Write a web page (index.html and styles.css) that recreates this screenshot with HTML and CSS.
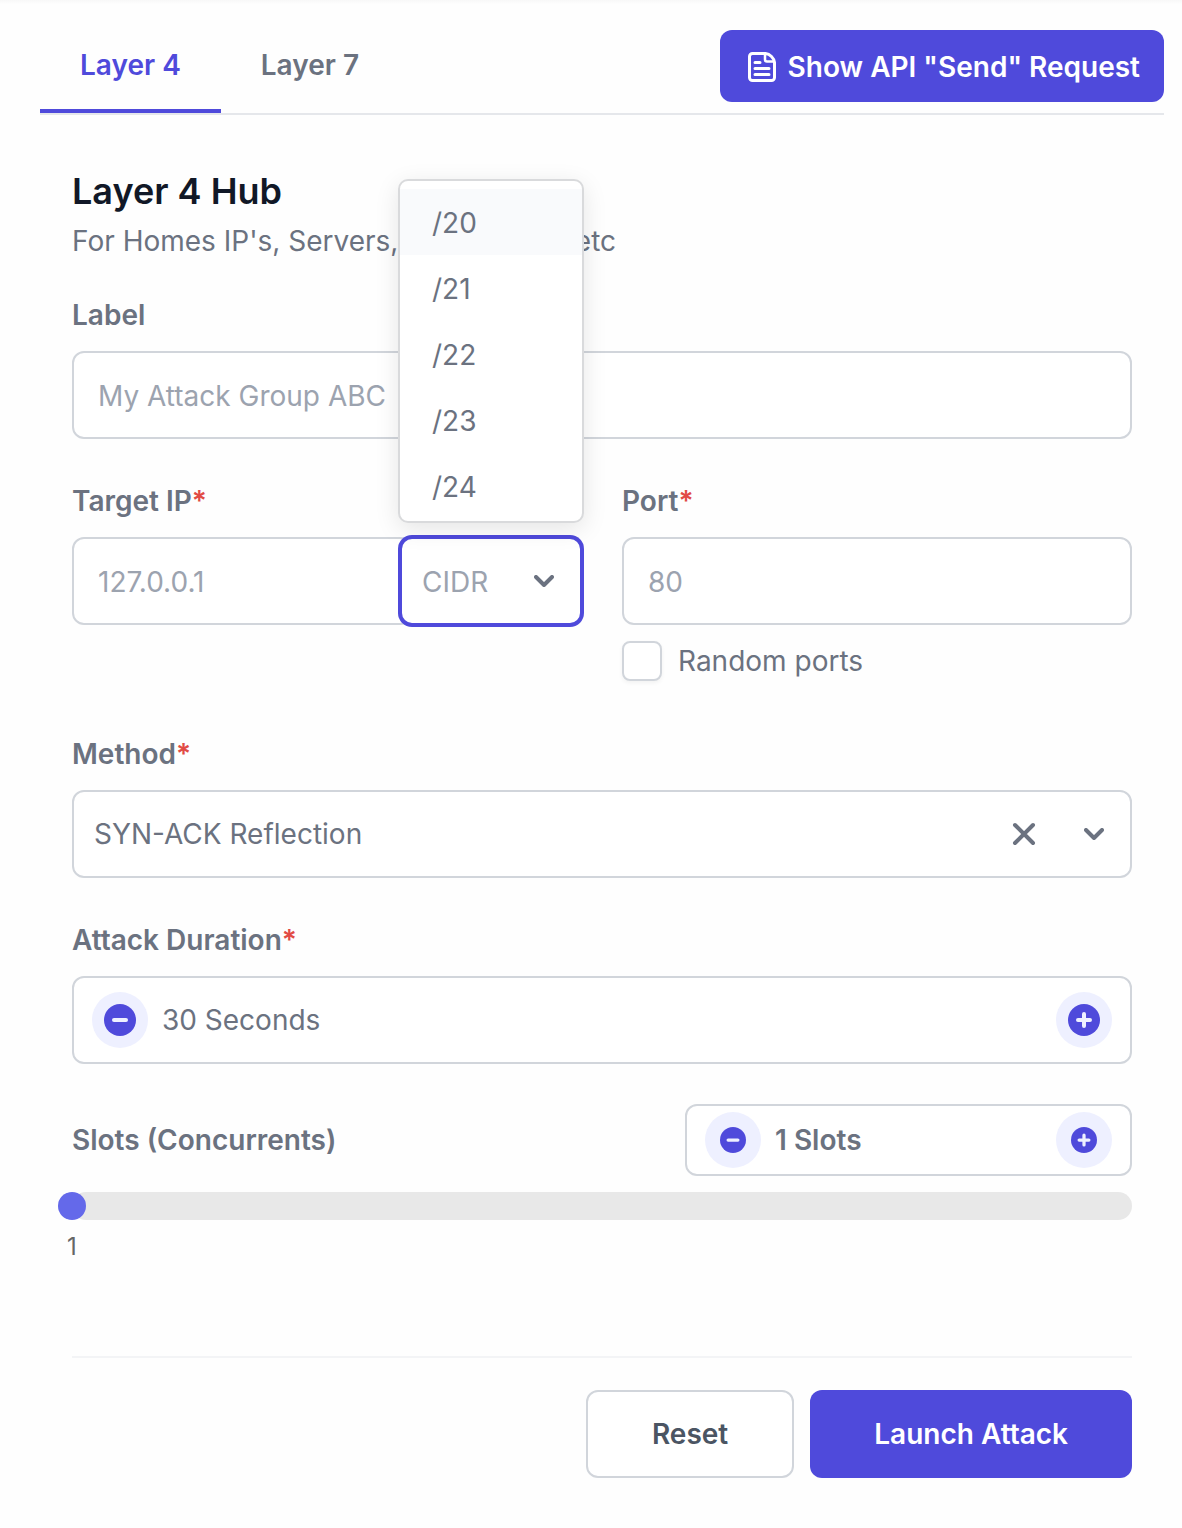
FILE: index.html
```html
<!DOCTYPE html>
<html lang="en">
<head>
<meta charset="utf-8">
<meta name="viewport" content="width=device-width, initial-scale=1">
<title>Layer 4 Hub</title>
<link rel="stylesheet" href="styles.css">
</head>
<body>
<main class="page">
  <header class="topbar">
    <nav class="tabs">
      <a class="tab tab-active" href="#layer4" aria-current="page">Layer 4</a>
      <a class="tab" href="#layer7">Layer 7</a>
    </nav>
    <button class="btn btn-primary btn-api" type="button">
      <svg class="icon-doc" viewBox="0 0 28 30" width="28" height="30" fill="none" stroke="currentColor" stroke-width="3" stroke-linejoin="round" aria-hidden="true">
        <path d="M4.500 1.500H17.500C22 2 26 6 26.500 10.500V25.500a3 3 0 0 1-3 3H4.500a3 3 0 0 1-3-3V4.500a3 3 0 0 1 3-3Z"/>
        <path d="M17 2V7.500a2 2 0 0 0 2 2H26" stroke-width="2.500"/>
        <path d="M7 10.500h5M7 16.500h14M7 22.500h14" stroke-linecap="round" stroke-width="3"/>
      </svg>
      Show API "Send" Request
    </button>
  </header>

  <form class="panel" id="layer4">
    <h1 class="title">Layer 4 Hub</h1>
    <p class="subtitle">For Homes IP's, Servers, VPN's, VPS, etc</p>

    <div class="field">
      <label class="label" for="label">Label</label>
      <input class="control" id="label" type="text" placeholder="My Attack Group ABC">
    </div>

    <div class="columns">
      <div class="field">
        <label class="label" for="ip">Target IP<span class="required">*</span></label>
        <div class="ip-group">
          <input class="control ip-input" id="ip" type="text" placeholder="127.0.0.1">
          <div class="select-wrap cidr">
            <select class="control select cidr-select" aria-label="CIDR">
              <option>CIDR</option>
              <option>/20</option>
              <option>/21</option>
              <option>/22</option>
              <option>/23</option>
              <option>/24</option>
            </select>
            <svg class="chevron" viewBox="0 0 20 12" width="20" height="12" aria-hidden="true"><path d="M2 2l8 8 8-8"/></svg>
            <ul class="menu" role="listbox" aria-label="CIDR options">
              <li class="menu-item menu-item-active" role="option" aria-selected="false">/20</li>
              <li class="menu-item" role="option" aria-selected="false">/21</li>
              <li class="menu-item" role="option" aria-selected="false">/22</li>
              <li class="menu-item" role="option" aria-selected="false">/23</li>
              <li class="menu-item" role="option" aria-selected="false">/24</li>
            </ul>
          </div>
        </div>
      </div>
      <div class="field">
        <label class="label" for="port">Port<span class="required">*</span></label>
        <input class="control" id="port" type="text" placeholder="80">
        <label class="check">
          <input class="check-box" type="checkbox">
          Random ports
        </label>
      </div>
    </div>

    <div class="field field-method">
      <label class="label" for="method">Method<span class="required">*</span></label>
      <div class="select-wrap">
        <select class="control select" id="method">
          <option>SYN-ACK Reflection</option>
        </select>
        <button class="clear" type="button" aria-label="Clear method">
          <svg class="cross" viewBox="0 0 24 24" width="24" height="24" aria-hidden="true"><path d="M3 3l18 18M21 3L3 21"/></svg>
        </button>
        <svg class="chevron" viewBox="0 0 20 12" width="20" height="12" aria-hidden="true"><path d="M2 2l8 8 8-8"/></svg>
      </div>
    </div>

    <div class="field">
      <label class="label" for="duration">Attack Duration<span class="required">*</span></label>
      <div class="stepper">
        <button class="step" type="button" aria-label="Decrease duration">
          <svg viewBox="0 0 32 32" width="32" height="32" aria-hidden="true"><circle class="disc" cx="16" cy="16" r="16"/><path class="sign" d="M10 16h12"/></svg>
        </button>
        <input class="step-value" id="duration" type="text" value="30 Seconds">
        <button class="step" type="button" aria-label="Increase duration">
          <svg viewBox="0 0 32 32" width="32" height="32" aria-hidden="true"><circle class="disc" cx="16" cy="16" r="16"/><path class="sign" d="M10 16h12M16 10v12"/></svg>
        </button>
      </div>
    </div>

    <div class="slots">
      <label class="label slots-label" for="slots">Slots (Concurrents)</label>
      <div class="stepper stepper-small">
        <button class="step" type="button" aria-label="Decrease slots">
          <svg viewBox="0 0 32 32" width="26" height="26" aria-hidden="true"><circle class="disc" cx="16" cy="16" r="16"/><path class="sign" d="M10 16h12"/></svg>
        </button>
        <input class="step-value step-value-bold" id="slots" type="text" value="1 Slots">
        <button class="step" type="button" aria-label="Increase slots">
          <svg viewBox="0 0 32 32" width="26" height="26" aria-hidden="true"><circle class="disc" cx="16" cy="16" r="16"/><path class="sign" d="M10 16h12M16 10v12"/></svg>
        </button>
      </div>
    </div>
    <div class="slider">
      <input class="range" type="range" min="1" max="10" value="1" aria-label="Slots">
    </div>
    <div class="marks"><span class="mark">1</span></div>

    <footer class="actions">
      <button class="btn btn-outline" type="reset">Reset</button>
      <button class="btn btn-primary btn-large" type="button">Launch Attack</button>
    </footer>
  </form>
</main>
</body>
</html>
```
FILE: styles.css
```css
:root {
  --indigo: #4f4adb;
  --indigo-soft: #eef0ff;
  --gray: #6b7280;
  --gray-light: #9ca3af;
  --line: #d1d5db;
}

* {
  box-sizing: border-box;
}

body {
  margin: 0;
  background: #fefefe linear-gradient(#f8f8f8, #fefefe) no-repeat top / 100% 4px;
  color: var(--gray);
  font: 400 28px/40px Inter, "Liberation Sans", sans-serif;
}

input,
select,
button {
  font: inherit;
  color: inherit;
}

button {
  cursor: pointer;
}

.page {
  padding: 30px 18px 50px 40px;
}

.topbar {
  display: flex;
  justify-content: space-between;
  align-items: flex-end;
  border-bottom: 2px solid #e5e7eb;
}

.tabs {
  display: flex;
}

.tab {
  padding: 15px 40px 24px;
  border-bottom: 4px solid transparent;
  color: var(--gray);
  font-weight: 600;
  text-decoration: none;
}

.tab-active {
  border-color: var(--indigo);
  color: var(--indigo);
}

.btn {
  display: flex;
  align-items: center;
  justify-content: center;
  height: 88px;
  padding: 0 64px;
  border: 2px solid var(--line);
  border-radius: 12px;
  background: #fff;
  font-weight: 600;
  white-space: nowrap;
}

.btn-primary {
  border: 0;
  background: var(--indigo);
  color: #fff;
}

.btn-outline {
  color: #4b5563;
}

.btn-api {
  gap: 12px;
  height: 72px;
  margin-bottom: 11px;
  padding: 1px 24px 0 28px;
}

.panel {
  padding: 52px 32px 0;
}

.title {
  margin: 0;
  color: #111827;
  font-size: 36px;
  font-weight: 600;
  line-height: 48px;
}

.subtitle {
  margin: 6px 0 34px;
}

.field {
  margin-bottom: 42px;
}

.label {
  display: block;
  margin-bottom: 16px;
  font-weight: 600;
}

.required {
  color: #e14b45;
}

.control {
  display: block;
  width: 100%;
  height: 88px;
  padding: 2px 24px 0;
  border: 2px solid var(--line);
  border-radius: 12px;
  background: #fff;
  outline: 0;
}

.control::placeholder {
  color: var(--gray-light);
  opacity: 1;
}

.columns {
  display: grid;
  grid-template-columns: 1fr 1fr;
  gap: 40px;
}

.columns .field {
  margin-bottom: 53px;
}

.ip-group {
  display: flex;
}

.ip-input {
  flex: 1;
  min-width: 0;
  margin-right: -12px;
}

.select-wrap {
  position: relative;
}

.select {
  appearance: none;
  padding: 0 20px;
}

.cidr {
  flex: 0 0 182px;
}

.cidr-select {
  padding-top: 2px;
  border-color: var(--indigo);
  box-shadow: 0 0 0 2px var(--indigo);
  color: var(--gray-light);
}

.chevron,
.cross {
  fill: none;
  stroke: var(--gray);
  stroke-width: 4;
  stroke-linecap: round;
  stroke-linejoin: round;
}

.chevron {
  position: absolute;
  top: 38px;
  right: 28px;
  pointer-events: none;
}

.clear {
  position: absolute;
  top: 24px;
  right: 88px;
  display: grid;
  place-items: center;
  width: 40px;
  height: 40px;
  padding: 0;
  border: 0;
  background: none;
}

.menu {
  position: absolute;
  right: -2px;
  bottom: calc(100% + 14px);
  left: -2px;
  z-index: 1;
  margin: 0;
  padding: 8px 0 2px;
  border: 2px solid #d9dadc;
  border-radius: 10px;
  background: #fff;
  box-shadow: 0 6px 24px rgba(0, 0, 0, 0.1);
  list-style: none;
}

.menu-item {
  padding: 14px 32px 12px;
}

.menu-item-active {
  background: #f9fafc;
}

.check {
  display: flex;
  align-items: center;
  gap: 16px;
  margin-top: 16px;
}

.check-box {
  appearance: none;
  width: 40px;
  height: 40px;
  margin: 0;
  border: 2px solid var(--line);
  border-radius: 8px;
  background: #fff;
  box-shadow: 0 2px 4px rgba(0, 0, 0, 0.05);
}

.stepper {
  display: flex;
  align-items: center;
  gap: 14px;
  height: 88px;
  padding: 0 18px;
  border: 2px solid var(--line);
  border-radius: 12px;
  background: #fff;
}

.step {
  display: grid;
  flex: none;
  place-items: center;
  width: 56px;
  height: 56px;
  padding: 0;
  border: 0;
  border-radius: 50%;
  background: var(--indigo-soft);
}

.disc {
  fill: var(--indigo);
}

.sign {
  fill: none;
  stroke: var(--indigo-soft);
  stroke-width: 4;
  stroke-linecap: round;
}

.step-value {
  flex: 1;
  min-width: 0;
  padding: 0;
  border: 0;
  background: none;
  outline: 0;
}

.step-value-bold {
  font-weight: 600;
}

.slots {
  display: flex;
  align-items: center;
  justify-content: space-between;
  margin-top: -2px;
}

.slots-label {
  margin: 0;
}

.stepper-small {
  width: 447px;
  height: 72px;
}

.slider {
  height: 28px;
  margin-top: 16px;
  border-radius: 14px;
  background: #e8e8e8;
}

.range {
  appearance: none;
  display: block;
  width: calc(100% + 28px);
  height: 28px;
  margin: 0 -14px;
  background: none;
}

.range::-webkit-slider-thumb {
  appearance: none;
  width: 28px;
  height: 28px;
  border-radius: 50%;
  background: #6469ea;
}

.marks {
  display: flex;
  margin: 7px -14px 0;
  color: #666;
  font-size: 24px;
}

.mark {
  width: 28px;
  text-align: center;
}

.actions {
  display: flex;
  justify-content: flex-end;
  gap: 16px;
  margin-top: 89px;
  padding-top: 32px;
  border-top: 2px solid #f3f4f6;
}
```
